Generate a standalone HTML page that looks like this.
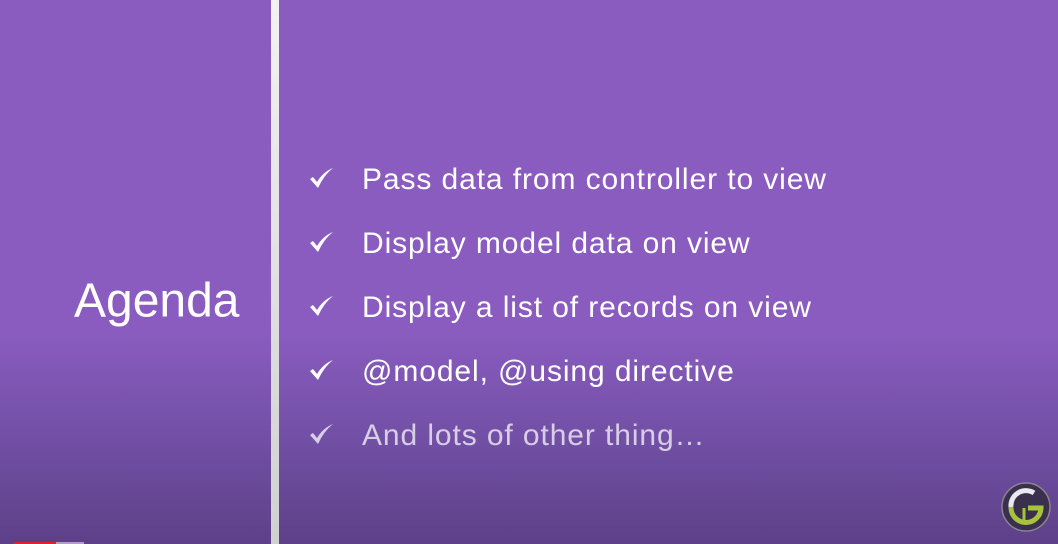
<!DOCTYPE html>
<html><head><style>
html,body{margin:0;padding:0}
body{width:1058px;height:544px;position:relative;overflow:hidden;font-family:"Liberation Sans",sans-serif;
background:linear-gradient(to bottom,#8a5cc0 0px,#8a5cc0 330px,#6f4ea2 450px,#5d4088 544px);}
.div{position:absolute;left:271px;top:0;width:8px;height:544px;background:linear-gradient(#f2f2f2,#d0d0d0);}
.ag{position:absolute;left:74px;top:316px;transform:translateY(-80%);font-size:48px;color:#fff;line-height:1}
.it{position:absolute;left:362px;font-size:30px;letter-spacing:0.9px;color:#fff;line-height:1;white-space:nowrap}
.ck{position:absolute;left:309px;width:25px;height:22px}
.dim{opacity:.72}
.bar{position:absolute;top:542px;height:2px}
</style></head><body>
<div class="div"></div>
<div class="ag">Agenda</div>
<div class="it" style="top:165px">Pass data from controller to view</div>
<div class="it" style="top:229px">Display model data on view</div>
<div class="it" style="top:293px">Display a list of records on view</div>
<div class="it" style="top:357px">@model, @using directive</div>
<div class="it dim" style="top:421px">And lots of other thing…</div>
<svg class="ck" style="top:167px" viewBox="0 0 25 22"><path d="M1 12 L4 10 L8 15 Q14 5 24 1 Q15 8 9 21 Z" fill="#fff"/></svg>
<svg class="ck" style="top:231px" viewBox="0 0 25 22"><path d="M1 12 L4 10 L8 15 Q14 5 24 1 Q15 8 9 21 Z" fill="#fff"/></svg>
<svg class="ck" style="top:295px" viewBox="0 0 25 22"><path d="M1 12 L4 10 L8 15 Q14 5 24 1 Q15 8 9 21 Z" fill="#fff"/></svg>
<svg class="ck" style="top:359px" viewBox="0 0 25 22"><path d="M1 12 L4 10 L8 15 Q14 5 24 1 Q15 8 9 21 Z" fill="#fff"/></svg>
<svg class="ck dim" style="top:423px" viewBox="0 0 25 22"><path d="M1 12 L4 10 L8 15 Q14 5 24 1 Q15 8 9 21 Z" fill="#fff"/></svg>
<svg style="position:absolute;left:1000px;top:481px" width="52" height="52" viewBox="0 0 52 52">
<circle cx="26" cy="26" r="24" fill="#3a2f4c" stroke="#8a8494" stroke-width="1.5"/>
<path d="M34 12 A15 15 0 0 0 11 26" fill="none" stroke="#e8e8ee" stroke-width="5"/>
<path d="M11 26 A15 15 0 0 0 41 27 L28 27" fill="none" stroke="#a7c23c" stroke-width="5"/>
<path d="M24 27 L24 40" stroke="#a7c23c" stroke-width="3"/>
</svg>
<div class="bar" style="left:14px;width:42px;background:#e0202a"></div>
<div class="bar" style="left:56px;width:28px;background:#b0a0c8"></div>
</body></html>
